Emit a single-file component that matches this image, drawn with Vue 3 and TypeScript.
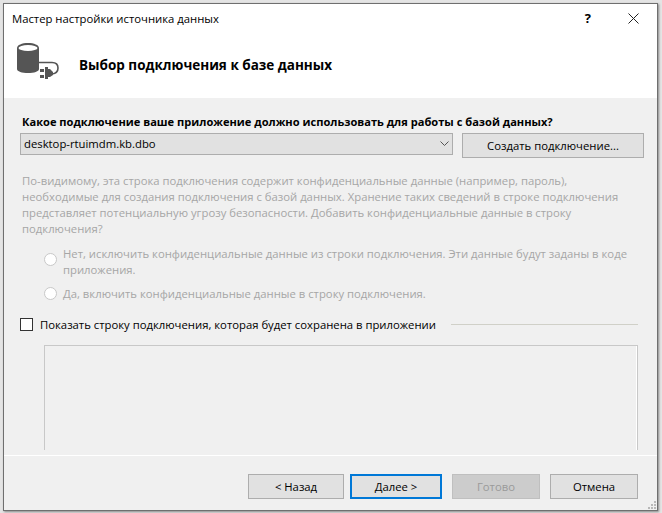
<script setup lang="ts">
const hint: string[] = [
  'По-видимому, эта строка подключения содержит конфиденциальные данные (например, пароль),',
  'необходимые для создания подключения с базой данных. Хранение таких сведений в строке подключения',
  'представляет потенциальную угрозу безопасности. Добавить конфиденциальные данные в строку',
  'подключения?',
]
const grip: [number, number][] = [[8, 0], [8, 3], [5, 3], [8, 6], [5, 6], [2, 6]]
</script>

<template>
  <div class="desktop">
    <div class="window">
      <div class="titlebar">
        <span class="title">Мастер настройки источника данных</span>
        <span class="help">?</span>
        <svg class="close" width="11" height="11" viewBox="0 0 11 11">
          <path d="M0.500 0.500L10.500 10.500M10.500 0.500L0.500 10.500" stroke="#222" stroke-width="1" fill="none" />
        </svg>
      </div>
      <div class="header">
        <svg class="dbicon" width="44" height="37" viewBox="0 0 44 37">
          <path d="M0 5C0 2 5 0 11 0S22 2 22 5V26C22 28.500 17 30 11 30S0 28.500 0 26Z" fill="#555" />
          <ellipse cx="11" cy="5" rx="9.500" ry="3" fill="#fff" />
          <path d="M22 19.500H35C39 19.500 41 22 41 25S39 30.500 35 31" fill="none" stroke="#555" stroke-width="1.600" />
          <path d="M23 26H27V29H23ZM23 32H27V35H23ZM28 24H31V36H28ZM31 26H33L36 29V32L33 34H31Z" fill="#555" />
        </svg>
        <span class="heading">Выбор подключения к базе данных</span>
      </div>
      <div class="body">
        <div class="question">Какое подключение ваше приложение должно использовать для работы с базой данных?</div>
        <div class="conn-row">
          <div class="combo">
            <span>desktop-rtuimdm.kb.dbo</span>
            <svg width="9" height="5" viewBox="0 0 9 5"><path d="M0.500 0.500L4.500 4.500L8.500 0.500" fill="none" stroke="#555" /></svg>
          </div>
          <button class="btn create">Создать подключение...</button>
        </div>
        <div class="hint">
          <div v-for="line in hint" :key="line">{{ line }}</div>
        </div>
        <div class="radio-row first">
          <span class="radio"></span>
          <span>Нет, исключить конфиденциальные данные из строки подключения. Эти данные будут заданы в коде<br />приложения.</span>
        </div>
        <div class="radio-row second">
          <span class="radio"></span>
          <span>Да, включить конфиденциальные данные в строку подключения.</span>
        </div>
        <div class="show-row">
          <span class="check"></span>
          <span class="show-label">Показать строку подключения, которая будет сохранена в приложении</span>
          <span class="rule"></span>
        </div>
        <div class="connbox"></div>
      </div>
      <div class="footer">
        <button class="btn back">&lt; Назад</button>
        <button class="btn next">Далее &gt;</button>
        <button class="btn done" disabled>Готово</button>
        <button class="btn cancel">Отмена</button>
      </div>
      <svg class="grip" width="10" height="8" viewBox="0 0 10 8">
        <rect v-for="p in grip" :key="p.join()" :x="p[0]" :y="p[1]" width="2" height="2" fill="#b8b8b8" />
      </svg>
    </div>
  </div>
</template>

<style>
html, body { margin: 0; background: #e8e8e8; }
</style>

<style scoped>
.desktop {
  width: 662px;
  height: 513px;
  padding: 3px 4px 2px 3px;
  box-sizing: border-box;
  background: #e4e4e4;
  font-family: "Open Sans", "Noto Sans", sans-serif;
  font-size: 11.300px;
  overflow: hidden;
}
.window {
  position: relative;
  width: 655px;
  height: 508px;
  box-sizing: border-box;
  border: 1px solid #6f6f6f;
  background: #f0f0f0;
  display: flex;
  flex-direction: column;
  box-shadow: 1px 1px 2px #888;
}
.titlebar {
  height: 27px;
  background: #fff;
  display: flex;
  align-items: center;
  padding: 1px 18px 0 8px;
  box-sizing: border-box;
  color: #000;
  flex: none;
}
.title { flex: 1; }
.help { font-weight: 700; margin-right: 37px; font-size: 13px; }
.header {
  height: 67px;
  flex: none;
  background: #fff;
  display: flex;
  align-items: flex-start;
  padding: 12px 0 0 13px;
  box-sizing: border-box;
}
.dbicon { flex: none; margin-right: 18px; }
.heading { font-weight: 700; font-size: 13.500px; color: #000; margin-top: 13px; }
.body {
  flex: 1;
  min-height: 0;
  padding: 16px 13px 0 16px;
  overflow: hidden;
}
.question { font-weight: 700; font-size: 11.100px; color: #000; line-height: 16px; margin-left: 2px; }
.conn-row { display: flex; margin-top: 3px; gap: 9px; align-items: flex-start; }
.combo {
  width: 433px;
  height: 22px;
  box-sizing: border-box;
  border: 1px solid #adadad;
  background: #e1e1e1;
  display: flex;
  align-items: center;
  justify-content: space-between;
  padding: 0 3px 2px;
  color: #000;
}
.btn {
  font: inherit;
  color: #000;
  background: #e1e1e1;
  border: 1px solid #adadad;
  padding: 0;
  box-sizing: border-box;
  height: 25px;
}
.create { width: 182px; }
.hint { margin: 15px 0 0 2px; color: #a6a6a6; line-height: 16px; white-space: nowrap; }
.radio-row { display: flex; color: #a6a6a6; line-height: 16px; padding-left: 24px; white-space: nowrap; }
.first { margin-top: 9px; align-items: flex-start; }
.second { margin-top: 8px; align-items: flex-start; }
.radio {
  width: 13px;
  height: 13px;
  box-sizing: border-box;
  border: 1px solid #c8c8c8;
  background: #fff;
  border-radius: 50%;
  margin: 7px 6px 0 0;
  flex: none;
}
.second .radio { margin-top: 1px; }
.show-row { display: flex; align-items: center; margin-top: 14px; height: 16px; }
.check {
  width: 13px;
  height: 13px;
  box-sizing: border-box;
  border: 1px solid #333;
  background: #fff;
  flex: none;
  margin-right: 7px;
}
.show-label { color: #000; white-space: nowrap; }
.rule { flex: 1; height: 1px; background: #d0d0c8; margin: 0 6px 0 15px; }
.connbox {
  margin: 13px 6px 0 24px;
  height: 105px;
  box-sizing: border-box;
  border: 1px solid #c8c8c8;
  border-bottom: none;
  box-shadow: inset -1px 0 0 #fff;
  background: #f0f0f0;
}
.footer {
  flex: none;
  height: 55px;
  border-top: 1px solid #fff;
  display: flex;
  align-items: flex-start;
  padding: 18px 0 0 244px;
  box-sizing: border-box;
}
.back { width: 96px; margin-right: 6px; }
.next { width: 92px; border: 2px solid #0078d7; margin-right: 10px; }
.done { width: 88px; margin-right: 10px; background: #ccc; color: #9a9a9a; border-color: #bfbfbf; }
.cancel { width: 88px; }
.grip { position: absolute; right: 1px; bottom: 1px; }
</style>
